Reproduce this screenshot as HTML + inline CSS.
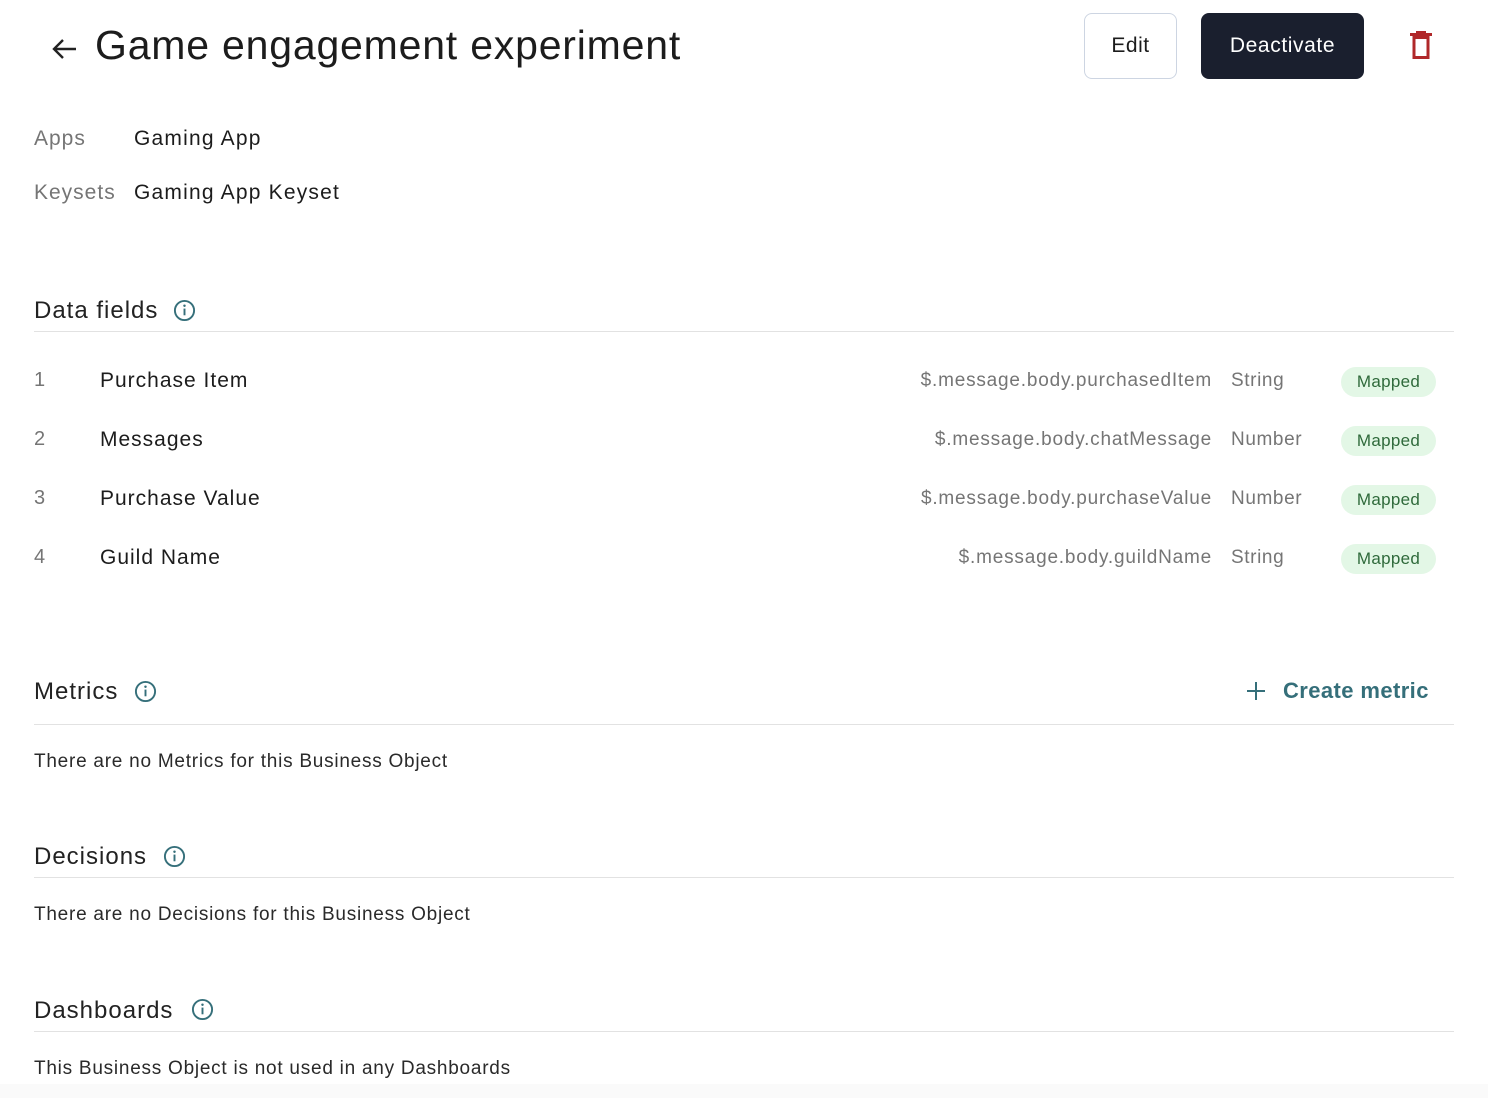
<!DOCTYPE html>
<html><head><meta charset="utf-8"><style>
*{margin:0;padding:0;box-sizing:border-box}
body{width:1488px;height:1098px;background:#fff;font-family:"Liberation Sans",sans-serif;color:#1c1c1c;position:relative;overflow:hidden}
.a{position:absolute;white-space:nowrap}
.h{font-size:24px;color:#222;letter-spacing:1px}
.line{position:absolute;left:34px;width:1420px;height:1px;background:#e2e2e2}
.gray{color:#757575}
.badge{position:absolute;left:1341px;width:95px;height:30px;border-radius:15px;background:#e3f7e6;color:#2f6a3b;font-size:17px;text-align:center;line-height:30px;letter-spacing:0.3px}
.num{font-size:20px;color:#757575}
.name{font-size:21px;color:#1c1c1c;letter-spacing:1px}
.path{font-size:19px;color:#757575;right:276px;letter-spacing:0.8px}
.type{font-size:19px;color:#757575;left:1231px;letter-spacing:0.6px}
.body{font-size:19px;color:#2a2a2a;letter-spacing:0.75px}
.info{position:absolute}
</style></head><body>
<svg class="a" style="left:50px;top:35px" width="28" height="28" viewBox="0 0 28 28"><path d="M26 14H4M13 5l-9 9 9 9" stroke="#222" stroke-width="2.4" fill="none"/></svg>
<div class="a" style="left:95px;top:22px;font-size:41px;color:#1c1c1c;letter-spacing:0.8px">Game engagement experiment</div>
<div class="a" style="left:1084px;top:13px;width:93px;height:66px;border:1px solid #cdd5e2;border-radius:8px;font-size:21px;text-align:center;line-height:64px;letter-spacing:0.5px">Edit</div>
<div class="a" style="left:1201px;top:13px;width:163px;height:66px;background:#1a1f2e;border-radius:8px;color:#fff;font-size:21px;text-align:center;line-height:66px;letter-spacing:0.6px">Deactivate</div>
<svg class="a" style="left:1408px;top:29px" width="26" height="32" viewBox="0 0 26 32"><rect x="8" y="2" width="10" height="3" fill="#b0282a"/><rect x="2" y="4" width="22" height="3" fill="#b0282a"/><rect x="6" y="8.5" width="14" height="20" fill="none" stroke="#b0282a" stroke-width="3"/></svg>

<div class="a gray" style="left:34px;top:127px;font-size:21px;letter-spacing:1px">Apps</div>
<div class="a" style="left:134px;top:127px;font-size:21px;letter-spacing:1.2px">Gaming App</div>
<div class="a gray" style="left:34px;top:181px;font-size:21px;letter-spacing:1px">Keysets</div>
<div class="a" style="left:134px;top:181px;font-size:21px;letter-spacing:1.2px">Gaming App Keyset</div>

<div class="a h" style="left:34px;top:297px">Data fields</div>
<svg class="info" style="left:173px;top:299px" width="23" height="23" viewBox="0 0 24 24"><circle cx="12" cy="12" r="10" stroke="#356f7a" stroke-width="2" fill="none"/><rect x="11" y="10" width="2" height="7" fill="#356f7a"/><circle cx="12" cy="7" r="1.3" fill="#356f7a"/></svg>
<div class="line" style="top:331px"></div>

<div class="a num" style="left:34px;top:369px">1</div><div class="a name" style="left:100px;top:369px">Purchase Item</div><div class="a path" style="top:370px">$.message.body.purchasedItem</div><div class="a type" style="top:370px">String</div><div class="badge" style="top:367px">Mapped</div>
<div class="a num" style="left:34px;top:428px">2</div><div class="a name" style="left:100px;top:428px">Messages</div><div class="a path" style="top:429px">$.message.body.chatMessage</div><div class="a type" style="top:429px">Number</div><div class="badge" style="top:426px">Mapped</div>
<div class="a num" style="left:34px;top:487px">3</div><div class="a name" style="left:100px;top:487px">Purchase Value</div><div class="a path" style="top:488px">$.message.body.purchaseValue</div><div class="a type" style="top:488px">Number</div><div class="badge" style="top:485px">Mapped</div>
<div class="a num" style="left:34px;top:546px">4</div><div class="a name" style="left:100px;top:546px">Guild Name</div><div class="a path" style="top:547px">$.message.body.guildName</div><div class="a type" style="top:547px">String</div><div class="badge" style="top:544px">Mapped</div>

<div class="a h" style="left:34px;top:678px">Metrics</div>
<svg class="info" style="left:134px;top:680px" width="23" height="23" viewBox="0 0 24 24"><circle cx="12" cy="12" r="10" stroke="#356f7a" stroke-width="2" fill="none"/><rect x="11" y="10" width="2" height="7" fill="#356f7a"/><circle cx="12" cy="7" r="1.3" fill="#356f7a"/></svg>
<svg class="a" style="left:1246px;top:681px" width="20" height="20" viewBox="0 0 20 20"><path d="M10 1v18M1 10h18" stroke="#356f7a" stroke-width="2"/></svg>
<div class="a" style="left:1283px;top:678px;font-size:22px;font-weight:bold;color:#356f7a;letter-spacing:0.4px">Create metric</div>
<div class="line" style="top:724px"></div>
<div class="a body" style="left:34px;top:751px">There are no Metrics for this Business Object</div>

<div class="a h" style="left:34px;top:843px">Decisions</div>
<svg class="info" style="left:163px;top:845px" width="23" height="23" viewBox="0 0 24 24"><circle cx="12" cy="12" r="10" stroke="#356f7a" stroke-width="2" fill="none"/><rect x="11" y="10" width="2" height="7" fill="#356f7a"/><circle cx="12" cy="7" r="1.3" fill="#356f7a"/></svg>
<div class="line" style="top:877px"></div>
<div class="a body" style="left:34px;top:904px">There are no Decisions for this Business Object</div>

<div class="a h" style="left:34px;top:997px">Dashboards</div>
<svg class="info" style="left:191px;top:998px" width="23" height="23" viewBox="0 0 24 24"><circle cx="12" cy="12" r="10" stroke="#356f7a" stroke-width="2" fill="none"/><rect x="11" y="10" width="2" height="7" fill="#356f7a"/><circle cx="12" cy="7" r="1.3" fill="#356f7a"/></svg>
<div class="line" style="top:1031px"></div>
<div class="a body" style="left:34px;top:1058px">This Business Object is not used in any Dashboards</div>
<div class="a" style="left:0;top:1084px;width:1488px;height:14px;background:#fafafa"></div>
</body></html>
